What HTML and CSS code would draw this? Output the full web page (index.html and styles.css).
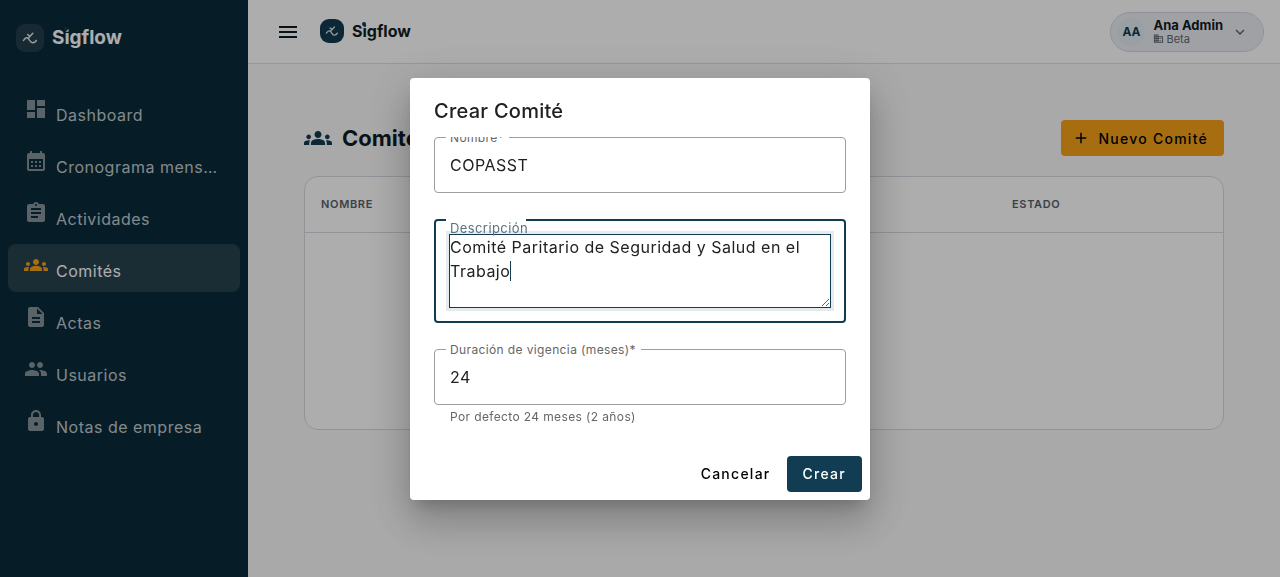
FILE: index.html
```html
<!DOCTYPE html>
<html lang="es">
<head>
  <meta charset="utf-8">
  <meta name="viewport" content="width=device-width, initial-scale=1">
  <title>Sigflow - Comités</title>
  <link rel="stylesheet" href="styles.css">
</head>
<body>

  <div class="app">
    <aside class="sidebar">
      <div class="brand brand-light">
        <span class="brand-tile">
          <svg viewBox="0 0 28 28" aria-hidden="true"><path d="M7.500 16.500c1.500-2.600 3.300-3.400 4.700-2 1.500 1.600 2.200 4.200 4.600 4.200 1.600 0 2.700-.9 3.500-2.200M11.700 10.500l2 1.600M12.500 14l4.300-4.700"/></svg>
        </span>
        <span class="brand-name">S<span class="brand-i">i</span>gflow</span>
      </div>

      <nav class="nav">
        <a class="nav-item" href="#dashboard">
          <svg class="icon" viewBox="0 0 24 24" aria-hidden="true"><path d="M3 13h8V3H3v10zm0 8h8v-6H3v6zm10 0h8V11h-8v10zm0-18v6h8V3h-8z"/></svg>
          <span class="nav-label">Dashboard</span>
        </a>
        <a class="nav-item" href="#cronograma">
          <svg class="icon" viewBox="0 0 24 24" aria-hidden="true"><path d="M19 4h-1V2h-2v2H8V2H6v2H5c-1.110 0-1.990.9-1.990 2L3 20a2 2 0 0 0 2 2h14c1.100 0 2-.9 2-2V6c0-1.100-.9-2-2-2zm0 16H5V10h14v10zM9 14H7v-2h2v2zm4 0h-2v-2h2v2zm4 0h-2v-2h2v2zm-8 4H7v-2h2v2zm4 0h-2v-2h2v2zm4 0h-2v-2h2v2z"/></svg>
          <span class="nav-label">Cronograma mensual</span>
        </a>
        <a class="nav-item" href="#actividades">
          <svg class="icon" viewBox="0 0 24 24" aria-hidden="true"><path d="M19 3h-4.180C14.400 1.840 13.300 1 12 1c-1.300 0-2.400.84-2.820 2H5c-1.100 0-2 .9-2 2v14c0 1.100.9 2 2 2h14c1.100 0 2-.9 2-2V5c0-1.100-.9-2-2-2zm-7 0c.55 0 1 .45 1 1s-.45 1-1 1-1-.45-1-1 .45-1 1-1zm2 14H7v-2h7v2zm3-4H7v-2h10v2zm0-4H7V7h10v2z"/></svg>
          <span class="nav-label">Actividades</span>
        </a>
        <a class="nav-item active" href="#comites">
          <svg class="icon" viewBox="0 0 24 24" aria-hidden="true"><path d="M12 12.750c1.630 0 3.070.39 4.240.9 1.080.48 1.760 1.560 1.760 2.730V18H6v-1.610c0-1.180.68-2.260 1.760-2.730 1.170-.52 2.610-.91 4.240-.91zM4 13c1.100 0 2-.9 2-2s-.9-2-2-2-2 .9-2 2 .9 2 2 2zm1.130 1.100c-.37-.06-.74-.1-1.130-.1-.99 0-1.930.21-2.780.58C.48 14.900 0 15.620 0 16.430V18h4.500v-1.610c0-.83.23-1.610.63-2.290zM20 13c1.100 0 2-.9 2-2s-.9-2-2-2-2 .9-2 2 .9 2 2 2zm4 3.430c0-.81-.48-1.530-1.220-1.850-.85-.37-1.790-.58-2.780-.58-.39 0-.76.04-1.130.1.4.68.63 1.460.63 2.290V18H24v-1.570zM12 6c1.660 0 3 1.340 3 3s-1.340 3-3 3-3-1.340-3-3 1.340-3 3-3z"/></svg>
          <span class="nav-label">Comités</span>
        </a>
        <a class="nav-item" href="#actas">
          <svg class="icon" viewBox="0 0 24 24" aria-hidden="true"><path d="M14 2H6c-1.100 0-1.990.9-1.990 2L4 20c0 1.100.89 2 1.990 2H18c1.100 0 2-.9 2-2V8l-6-6zm2 16H8v-2h8v2zm0-4H8v-2h8v2zm-3-5V3.500L18.500 9H13z"/></svg>
          <span class="nav-label">Actas</span>
        </a>
        <a class="nav-item" href="#usuarios">
          <svg class="icon" viewBox="0 0 24 24" aria-hidden="true"><path d="M16 11c1.660 0 2.990-1.340 2.990-3S17.660 5 16 5c-1.660 0-3 1.340-3 3s1.340 3 3 3zm-8 0c1.660 0 2.990-1.340 2.990-3S9.660 5 8 5C6.340 5 5 6.340 5 8s1.340 3 3 3zm0 2c-2.330 0-7 1.170-7 3.500V19h14v-2.500c0-2.330-4.670-3.500-7-3.500zm8 0c-.29 0-.62.02-.97.05 1.160.84 1.970 1.970 1.970 3.450V19h6v-2.500c0-2.330-4.670-3.500-7-3.500z"/></svg>
          <span class="nav-label">Usuarios</span>
        </a>
        <a class="nav-item" href="#notas">
          <svg class="icon" viewBox="0 0 24 24" aria-hidden="true"><path d="M18 8h-1V6c0-2.760-2.240-5-5-5S7 3.240 7 6v2H6c-1.100 0-2 .9-2 2v10c0 1.100.9 2 2 2h12c1.100 0 2-.9 2-2V10c0-1.100-.9-2-2-2zm-6 9c-1.100 0-2-.9-2-2s.9-2 2-2 2 .9 2 2-.9 2-2 2zm3.100-9H8.900V6c0-1.710 1.390-3.100 3.100-3.100 1.710 0 3.100 1.390 3.100 3.100v2z"/></svg>
          <span class="nav-label">Notas de empresa</span>
        </a>
      </nav>
    </aside>

    <div class="main">
      <header class="topbar">
        <button class="menu-button" type="button" aria-label="Menú">
          <svg class="icon" viewBox="0 0 24 24" aria-hidden="true"><path d="M3 18h18v-2H3v2zm0-5h18v-2H3v2zm0-7v2h18V6H3z"/></svg>
        </button>
        <div class="brand brand-dark">
          <span class="brand-tile">
            <svg viewBox="0 0 28 28" aria-hidden="true"><path d="M7.500 16.500c1.500-2.600 3.300-3.400 4.700-2 1.500 1.600 2.200 4.200 4.600 4.200 1.600 0 2.700-.9 3.500-2.200M11.700 10.500l2 1.600M12.500 14l4.300-4.700"/></svg>
          </span>
          <span class="brand-name">S<span class="brand-i">i</span>gflow</span>
        </div>
        <button class="user-button" type="button">
          <span class="avatar">AA</span>
          <span class="user-text">
            <span class="user-name">Ana Admin</span>
            <span class="user-company">
              <svg viewBox="0 0 24 24" aria-hidden="true"><path d="M12 7V3H2v18h20V7H12zM6 19H4v-2h2v2zm0-4H4v-2h2v2zm0-4H4V9h2v2zm0-4H4V5h2v2zm4 12H8v-2h2v2zm0-4H8v-2h2v2zm0-4H8V9h2v2zm0-4H8V5h2v2zm10 12h-8v-2h2v-2h-2v-2h2v-2h-2V9h8v10zm-2-8h-2v2h2v-2zm0 4h-2v2h2v-2z"/></svg>
              Beta
            </span>
          </span>
          <svg class="chevron" viewBox="0 0 24 24" aria-hidden="true"><path d="M16.590 8.590 12 13.170 7.410 8.590 6 10l6 6 6-6z"/></svg>
        </button>
      </header>

      <main class="content">
        <div class="page-head">
          <h1 class="page-title">
            <svg viewBox="0 0 24 24" aria-hidden="true"><path d="M12 12.750c1.630 0 3.070.39 4.240.9 1.080.48 1.760 1.560 1.760 2.730V18H6v-1.610c0-1.180.68-2.260 1.760-2.730 1.170-.52 2.610-.91 4.240-.91zM4 13c1.100 0 2-.9 2-2s-.9-2-2-2-2 .9-2 2 .9 2 2 2zm1.130 1.100c-.37-.06-.74-.1-1.130-.1-.99 0-1.930.21-2.780.58C.48 14.900 0 15.620 0 16.430V18h4.500v-1.610c0-.83.23-1.610.63-2.290zM20 13c1.100 0 2-.9 2-2s-.9-2-2-2-2 .9-2 2 .9 2 2 2zm4 3.430c0-.81-.48-1.530-1.220-1.850-.85-.37-1.790-.58-2.780-.58-.39 0-.76.04-1.130.1.4.68.63 1.460.63 2.290V18H24v-1.570zM12 6c1.660 0 3 1.340 3 3s-1.340 3-3 3-3-1.340-3-3 1.340-3 3-3z"/></svg>
            Comités
          </h1>
          <button class="btn btn-accent" type="button">
            <svg viewBox="0 0 24 24" aria-hidden="true"><path d="M19 13h-6v6h-2v-6H5v-2h6V5h2v6h6v2z"/></svg>
            Nuevo Comité
          </button>
        </div>

        <div class="card">
          <table class="table">
            <thead>
              <tr>
                <th>Nombre</th>
                <th class="col-status">Estado</th>
              </tr>
            </thead>
          </table>
        </div>
      </main>
    </div>
  </div>

  <div class="backdrop">
    <form class="dialog" role="dialog" aria-modal="true" aria-labelledby="dialogTitle">
      <h2 class="dialog-title" id="dialogTitle">Crear Comité</h2>

      <div class="dialog-content">
        <div class="field">
          <label for="nombre">Nombre*</label>
          <input type="text" id="nombre" value="COPASST" autocomplete="off">
        </div>

        <div class="field field-focused">
          <label for="descripcion">Descripción</label>
          <textarea id="descripcion" rows="3">Comité Paritario de Seguridad y Salud en el Trabajo</textarea>
          <span class="caret" id="caret"></span>
        </div>

        <div class="field">
          <label for="duracion">Duración de vigencia (meses)*</label>
          <input type="text" inputmode="numeric" id="duracion" value="24" aria-describedby="duracionHint">
        </div>
        <p class="hint" id="duracionHint">Por defecto 24 meses (2 años)</p>
      </div>

      <div class="dialog-actions">
        <button class="btn btn-text" type="button">Cancelar</button>
        <button class="btn btn-primary" type="submit">Crear</button>
      </div>
    </form>
  </div>

  <script>
    const descripcion = document.getElementById("descripcion");
    const caret = document.getElementById("caret");

    descripcion.focus();
    descripcion.setSelectionRange(descripcion.value.length, descripcion.value.length);

    // the drawn caret only marks the starting position
    ["keydown", "mousedown", "blur"].forEach((type) => {
      descripcion.addEventListener(type, () => {
        caret.hidden = true;
      });
    });
  </script>

</body>
</html>
```
FILE: styles.css
```css
* {
  box-sizing: border-box;
}

body {
  margin: 0;
  font-family: Inter, sans-serif;
  font-size: 16px;
  line-height: 24px;
  color: #0f1c24;
  background: #fafafa;
}

button,
input,
textarea {
  font-family: inherit;
}

svg {
  display: block;
  flex: none;
  fill: currentColor;
}

.icon {
  width: 24px;
  height: 24px;
}

.app {
  display: flex;
  min-height: 100vh;
}

/* Sidebar */

.sidebar {
  flex: none;
  width: 248px;
  padding: 24px 8px;
  background: #0a2c3c;
}

.brand {
  display: flex;
  align-items: center;
  gap: 8px;
}

.brand-tile {
  border-radius: 9px;
}

.brand-tile svg {
  fill: none;
  stroke: #dfe5e8;
  stroke-width: 1.5;
  stroke-linecap: round;
  stroke-linejoin: round;
}

.brand-name {
  font-weight: 700;
}

/* coloured dot over the i */
.brand-i {
  position: relative;
}

.brand-i::before {
  content: "";
  position: absolute;
  top: 1px;
  left: 0;
  width: 4px;
  height: 4px;
  border-radius: 50%;
  background: #123c52;
}

.brand-light {
  padding: 0 8px;
  color: #fff;
  font-size: 19px;
}

.brand-light .brand-tile {
  background: #233f4c;
}

.brand-light svg {
  width: 28px;
  height: 28px;
}

.brand-dark {
  margin-bottom: 2px;
  font-size: 16px;
}

.brand-dark .brand-tile {
  background: #123c52;
}

.brand-dark svg {
  width: 24px;
  height: 24px;
}

.nav {
  display: flex;
  flex-direction: column;
  gap: 4px;
  margin-top: 36px;
}

.nav-item {
  display: flex;
  align-items: flex-start;
  gap: 8px;
  height: 48px;
  padding: 9px 16px;
  border-radius: 8px;
  color: #c2cacd;
  text-decoration: none;
}

.nav-item .icon {
  color: #859399;
}

.nav-label {
  margin-top: 6px;
  overflow: hidden;
  white-space: nowrap;
  text-overflow: ellipsis;
  letter-spacing: 0.03125em;
}

.nav-item.active {
  background: #27434f;
  color: #fff;
}

.nav-item.active .icon {
  color: #f5a31a;
}

/* Top bar */

.main {
  flex: 1;
  min-width: 0;
}

.topbar {
  display: flex;
  align-items: center;
  gap: 8px;
  height: 64px;
  padding: 0 16px;
  background: #fff;
  border-bottom: 1px solid #dcdfe3;
}

.menu-button {
  padding: 12px;
  border: 0;
  background: none;
  color: #0f1c24;
}

.user-button {
  display: flex;
  align-items: center;
  gap: 8px;
  height: 40px;
  margin-left: auto;
  padding: 0 14px 0 6px;
  border: 1px solid #d5dae2;
  border-radius: 20px;
  background: #eceef4;
  color: #0f1c24;
  text-align: left;
}

.avatar {
  width: 28px;
  border-radius: 50%;
  background: #e0ecf0;
  color: #123c52;
  font-size: 12px;
  font-weight: 700;
  line-height: 28px;
  text-align: center;
}

.user-text {
  display: flex;
  flex-direction: column;
}

.user-name {
  font-size: 13px;
  font-weight: 700;
  line-height: 14px;
}

.user-company {
  display: flex;
  align-items: center;
  gap: 2px;
  color: #5c6670;
  font-size: 11px;
  line-height: 14px;
}

.user-company svg {
  width: 11px;
  height: 11px;
}

.chevron {
  width: 18px;
  height: 18px;
  color: #5c6670;
}

/* Page */

.content {
  padding: 56px;
}

.page-head {
  display: flex;
  align-items: center;
  justify-content: space-between;
  margin-bottom: 20px;
}

.page-title {
  display: flex;
  align-items: center;
  gap: 10px;
  margin: 0;
  font-size: 22px;
  font-weight: 700;
}

.page-title svg {
  width: 28px;
  height: 28px;
  color: #123c52;
}

.btn {
  display: flex;
  align-items: center;
  height: 36px;
  padding: 0 16px;
  border: 0;
  border-radius: 4px;
  font-size: 14px;
  font-weight: 500;
  letter-spacing: 0.09em;
}

.btn-accent {
  gap: 8px;
  padding: 0 16px 0 11px;
  background: #f5a31a;
  color: #000;
}

.btn-accent svg {
  width: 18px;
  height: 18px;
}

.card {
  min-height: 254px;
  border: 1px solid #d5dae2;
  border-radius: 14px;
  background: #fff;
}

.table {
  width: 100%;
  border-collapse: collapse;
}

.table th {
  height: 55px;
  padding: 0 16px;
  border-bottom: 1px solid #d5dae2;
  color: #56616b;
  font-size: 11px;
  font-weight: 600;
  letter-spacing: 0.06em;
  text-align: left;
  text-transform: uppercase;
}

.table .col-status {
  width: 227px;
}

/* Dialog */

.backdrop {
  position: fixed;
  inset: 0;
  display: flex;
  align-items: center;
  justify-content: center;
  background: rgba(0, 0, 0, 0.32);
}

.dialog {
  width: 460px;
  max-width: 90vw;
  border-radius: 4px;
  background: #fff;
  color: #212121;
  box-shadow: 0 11px 15px -7px rgba(0, 0, 0, 0.2), 0 24px 38px 3px rgba(0, 0, 0, 0.14), 0 9px 46px 8px rgba(0, 0, 0, 0.12);
}

.dialog-title {
  margin: 0;
  padding: 17px 24px 10px;
  font-size: 20px;
  font-weight: 500;
  line-height: 32px;
  letter-spacing: 0.0125em;
}

.dialog-content {
  overflow: hidden;
  padding: 0 24px 19px;
}

.field {
  position: relative;
  border: 1px solid #9e9e9e;
  border-radius: 4px;
}

.field + .field {
  margin-top: 26px;
}

.field label {
  position: absolute;
  top: -8px;
  left: 11px;
  padding: 0 5px 0 4px;
  background: #fff;
  color: #666;
  font-size: 12px;
  line-height: 16px;
  letter-spacing: 0.03125em;
}

.field input,
.field textarea {
  display: block;
  width: 100%;
  border: 0;
  padding: 0;
  background: none;
  color: #212121;
  font-size: 16px;
  line-height: 24px;
  letter-spacing: 0.03125em;
  outline: none;
}

.field input {
  height: 54px;
  padding: 0 15px;
}

.field-focused {
  padding: 14px;
  border: 2px solid #123c52;
}

.field-focused label {
  top: -3px;
  left: 10px;
  padding-right: 0;
  background: linear-gradient(#fff, #fff) no-repeat 0 0 / 80px 5px;
  color: #597280;
  font-size: 13px;
  line-height: 20px;
}

.field-focused textarea {
  min-height: 72px;
  resize: vertical;
  outline: 1px solid #123c52;
  box-shadow: 0 0 0 4px #e3ebef;
  caret-color: #123c52;
}

.caret {
  position: absolute;
  top: 40px;
  left: 74px;
  width: 1px;
  height: 20px;
  background: #123c52;
}

.hint {
  margin: 0;
  padding: 2px 16px;
  color: #666;
  font-size: 12px;
  line-height: 20px;
  letter-spacing: 0.03125em;
}

.dialog-actions {
  display: flex;
  justify-content: flex-end;
  padding: 8px;
}

.btn-text {
  background: none;
  color: #000;
}

.btn-primary {
  background: #123c52;
  color: #fff;
}
```
